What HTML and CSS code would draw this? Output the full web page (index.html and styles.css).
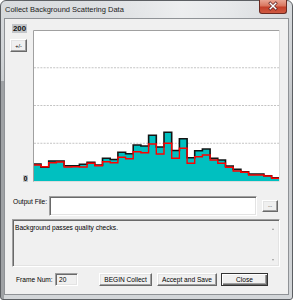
FILE: index.html
```html
<!DOCTYPE html>
<html>
<head>
<meta charset="utf-8">
<link rel="stylesheet" href="styles.css">
</head>
<body>
<div class="window">
  <div class="titlebar">
    <span class="title">Collect Background Scattering Data</span>
    <div class="close">
      <svg width="28" height="14" viewBox="0 0 28 14">
        <path d="M11 4 L17 10 M17 4 L11 10" stroke="#5a1a1a" stroke-width="3" stroke-linecap="square"/>
        <path d="M11 4 L17 10 M17 4 L11 10" stroke="#ffffff" stroke-width="1.6" stroke-linecap="square"/>
      </svg>
    </div>
  </div>
  <div class="client">
    <div class="top">
      <div class="axis">
        <div class="ymax">200</div>
        <div class="btn pm">+/-</div>
        <div class="ymin">0</div>
      </div>
      <svg class="chart" width="247" height="152" viewBox="33 30 247 152">
        <rect x="33" y="30" width="247" height="152" fill="#ffffff"/>
        <path d="M34 67.75 H279 M34 105.5 H279 M34 143.25 H279" stroke="#c4c4c4" stroke-width="1" stroke-dasharray="2 1.2" fill="none"/>
        <path d="M33.3 164 H41 V167.3 H48.7 V161 H56.4 V161 H64.1 V165.7 H71.7 V165.7 H79.4 V164.3 H87.1 V162.3 H94.8 V165 H102.5 V158.3 H110.2 V159.5 H117.9 V152.3 H125.6 V153.7 H133.2 V145 H140.9 V146 H148.6 V135.3 H156.3 V147 H164 V132.3 H171.7 V150.5 H179.4 V138.7 H187.1 V157.7 H194.7 V150.7 H202.4 V149 H210.1 V158.3 H217.8 V160 H225.5 V166 H233.2 V169.3 H240.9 V171.7 H248.6 V174 H256.2 V174 H263.9 V175.7 H271.6 V177.7 H279.3 V181 H33.3 Z" fill="#00c0c0"/>
        <path d="M33.3 164 H41 V167.3 H48.7 V161 H56.4 V161 H64.1 V165.7 H71.7 V165.7 H79.4 V164.3 H87.1 V162.3 H94.8 V165 H102.5 V158.3 H110.2 V159.5 H117.9 V152.3 H125.6 V153.7 H133.2 V145 H140.9 V146 H148.6 V135.3 H156.3 V147 H164 V132.3 H171.7 V150.5 H179.4 V138.7 H187.1 V157.7 H194.7 V150.7 H202.4 V149 H210.1 V158.3 H217.8 V160 H225.5 V166 H233.2 V169.3 H240.9 V171.7 H248.6 V174 H256.2 V174 H263.9 V175.7 H271.6 V177.7 H279.3" fill="none" stroke="#141414" stroke-width="1.6"/>
        <path d="M33.3 165 H41 V166.7 H48.7 V162.7 H56.4 V162 H64.1 V167 H71.7 V166.7 H79.4 V167 H87.1 V163.3 H94.8 V165.7 H102.5 V161.7 H110.2 V162.7 H117.9 V157.3 H125.6 V158.7 H133.2 V151.7 H140.9 V152.7 H148.6 V144 H156.3 V154 H164 V143.3 H171.7 V158.3 H179.4 V148.3 H187.1 V163.3 H194.7 V156.7 H202.4 V155 H210.1 V160 H217.8 V163.3 H225.5 V167.3 H233.2 V171 H240.9 V172.3 H248.6 V175 H256.2 V175 H263.9 V176 H271.6 V178.3 H279.3" fill="none" stroke="#ff0000" stroke-width="1.4"/>
        <path d="M33.5 182 V30.5 H279.5" fill="none" stroke="#a0a0a0" stroke-width="1"/>
        <path d="M279.5 30.5 V181.5 H33.5" fill="none" stroke="#dcdcdc" stroke-width="1"/>
      </svg>
    </div>
    <div class="file-row">
      <span class="lbl out-lbl">Output File:</span>
      <div class="field file"></div>
      <div class="btn browse">...</div>
    </div>
    <div class="log">
      <div class="log-text">Background passes quality checks.</div>
      <div class="scroll"><i class="up"></i><i class="down"></i></div>
    </div>
    <div class="bottom">
      <span class="lbl frame-lbl">Frame Num:</span>
      <div class="field num">20</div>
      <div class="btn begin">BEGIN Collect</div>
      <div class="btn accept">Accept and Save</div>
      <div class="btn default closebtn">Close</div>
    </div>
  </div>
</div>
</body>
</html>
```

FILE: styles.css
```css
html, body {
  margin: 0;
  padding: 0;
  background: #ffffff;
}
body {
  width: 293px;
  height: 300px;
  overflow: hidden;
  font-family: "Liberation Sans", Arial, sans-serif;
  color: #000;
}
.window {
  box-sizing: border-box;
  width: 293px;
  height: 300px;
  border: 1px solid #5c5f63;
  border-radius: 6px 6px 3px 3px;
  padding: 0 3px 4px 3px;
  display: flex;
  flex-direction: column;
  background:
    linear-gradient(#9fa2a5, #9fa2a5) no-repeat 0 80px / 3px 100%,
    linear-gradient(to bottom, #d8dbde 0, #cfd2d5 60px, #c4c7ca 100px, #cbced1 200px, #d3d6d9 100%);
}
.titlebar {
  height: 17px;
  display: flex;
  align-items: flex-start;
  background: linear-gradient(to right, rgba(255,255,255,0) 0%, rgba(255,255,255,0.15) 35%, rgba(255,255,255,0.55) 62%, rgba(255,255,255,0.4) 78%, rgba(255,255,255,0) 100%);
  margin: 0 -3px;
  padding: 0 3px;
}
.title {
  font-size: 7.5px;
  line-height: 17px;
  padding-left: 1px;
  color: #1b1b1b;
  flex: 1;
}
.close {
  width: 28px;
  height: 14px;
  margin-top: -1px;
  margin-right: 2px;
  box-sizing: border-box;
  border: 1px solid #6b2a22;
  border-top: none;
  border-radius: 0 0 3px 3px;
  background: linear-gradient(to bottom, #e9a593 0%, #d9765f 45%, #c4402a 55%, #cf5a42 100%);
  display: flex;
  align-items: center;
  justify-content: center;
  overflow: hidden;
}
.close svg { display: block; margin-top: -1px; }
.client {
  flex: 1;
  background: #f0f0f0;
  border: 1px solid #8f9296;
  display: flex;
  flex-direction: column;
  font-size: 6.6px;
}
.top {
  display: flex;
  align-items: stretch;
}
.axis {
  width: 28px;
  display: flex;
  flex-direction: column;
  align-items: flex-end;
  padding-right: 6px;
  box-sizing: border-box;
  padding-top: 5px;
}
.ymax {
  width: 15px;
  height: 9px;
  background: #c3c6ca;
  font-weight: bold;
  font-size: 7.8px;
  line-height: 9px;
  text-align: center;
  color: #111;
}
.pm {
  width: 17px;
  height: 13px;
  margin-top: 6px;
  font-size: 5.5px;
}
.ymin {
  margin-top: auto;
  width: 5px;
  height: 7px;
  margin-right: -1px;
  background: #c3c6ca;
  font-weight: bold;
  font-size: 6.5px;
  line-height: 7px;
  text-align: center;
}
.chart {
  display: block;
  margin-top: 11px;
}
.btn {
  box-sizing: border-box;
  background: #f0f0f0;
  border: 1px solid;
  border-color: #ffffff #696969 #696969 #ffffff;
  box-shadow: inset -1px -1px #a0a0a0, inset 1px 1px #e3e3e3;
  display: flex;
  align-items: center;
  justify-content: center;
  white-space: nowrap;
  color: #000;
}
.btn.default {
  border-color: #333;
  box-shadow: inset 1px 1px #ffffff, inset -1px -1px #696969, inset -2px -2px #a0a0a0;
}
.field {
  box-sizing: border-box;
  border: 1px solid;
  border-color: #a0a0a0 #ffffff #ffffff #a0a0a0;
  box-shadow: inset 1px 1px #696969, inset -1px -1px #e3e3e3;
}
.file-row {
  display: flex;
  align-items: flex-start;
  margin-top: 14px;
  height: 20px;
}
.lbl {
  white-space: nowrap;
}
.out-lbl {
  width: 36px;
  padding-left: 8px;
  margin-top: 2px;
  line-height: 8px;
}
.file {
  width: 208px;
  height: 20px;
  background: #ffffff;
}
.browse {
  width: 16px;
  height: 12px;
  margin-left: 5px;
  margin-top: 4px;
  font-size: 5px;
  align-items: flex-end;
  padding-bottom: 3px;
}
.log {
  margin: 3px 0 0 7px;
  width: 268px;
  height: 48px;
  box-sizing: border-box;
  border: 1px solid;
  border-color: #a0a0a0 #ffffff #ffffff #a0a0a0;
  box-shadow: inset 1px 1px #696969, inset -1px -1px #e3e3e3;
  background: #f0f0f0;
  display: flex;
}
.log-text {
  flex: 1;
  padding: 4px 0 0 2px;
  line-height: 8px;
}
.scroll {
  width: 12px;
  display: flex;
  flex-direction: column;
  align-items: center;
  justify-content: space-between;
  padding: 8px 0 5px;
  box-sizing: border-box;
}
.scroll i {
  display: block;
  width: 0;
  height: 0;
  border-left: 1.5px solid transparent;
  border-right: 1.5px solid transparent;
}
.scroll .up { border-bottom: 2px solid #9a9a9a; }
.scroll .down { border-top: 2px solid #9a9a9a; }
.bottom {
  display: flex;
  align-items: center;
  margin-top: 6px;
  height: 13px;
}
.frame-lbl {
  width: 39px;
  padding-left: 11px;
}
.num {
  width: 23px;
  height: 13px;
  background: #f0f0f0;
  padding-left: 3px;
  line-height: 11px;
}
.begin {
  width: 53px;
  height: 13px;
  margin-left: 21px;
}
.accept {
  width: 60px;
  height: 13px;
  margin-left: 5px;
}
.closebtn {
  width: 47px;
  height: 13px;
  margin-left: 4px;
}
```
